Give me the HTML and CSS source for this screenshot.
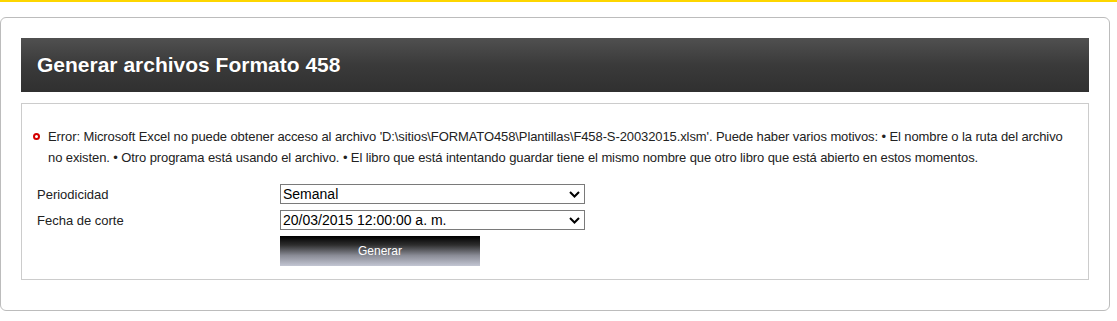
FILE: index.html
```html
<!DOCTYPE html>
<html lang="es">
<head>
  <meta charset="UTF-8">
  <title>Generar archivos Formato 458</title>
  <link rel="stylesheet" href="styles.css">
</head>
<body>

<div class="page">
  <div class="panel">
    <h1 class="panel-title">Generar archivos Formato 458</h1>

    <div class="panel-body">
      <ul class="errors">
        <li>Error: Microsoft Excel no puede obtener acceso al archivo 'D:\sitios\FORMATO458\Plantillas\F458-S-20032015.xlsm'. Puede haber varios motivos: • El nombre o la ruta del archivo no existen. • Otro programa está usando el archivo. • El libro que está intentando guardar tiene el mismo nombre que otro libro que está abierto en estos momentos.</li>
      </ul>

      <form class="gen-form">
        <div class="row">
          <label for="periodicidad">Periodicidad</label>
          <span class="select-wrap">
            <select id="periodicidad">
              <option>Semanal</option>
              <option>Mensual</option>
            </select>
            <svg class="chevron" width="11" height="7" viewBox="0 0 11 7"><path d="M1 1l4.5 4.5L10 1" fill="none" stroke="#000" stroke-width="2"/></svg>
          </span>
        </div>
        <div class="row">
          <label for="fecha">Fecha de corte</label>
          <span class="select-wrap">
            <select id="fecha">
              <option>20/03/2015 12:00:00 a. m.</option>
            </select>
            <svg class="chevron" width="11" height="7" viewBox="0 0 11 7"><path d="M1 1l4.5 4.5L10 1" fill="none" stroke="#000" stroke-width="2"/></svg>
          </span>
        </div>
        <div class="row">
          <span class="spacer"></span>
          <button type="button" class="btn">Generar</button>
        </div>
      </form>
    </div>
  </div>
</div>

</body>
</html>
```

FILE: styles.css
```css
body {
  margin: 0;
  font-family: "Liberation Sans", Arial, sans-serif;
  color: #222;
  background-color: #fff;
  border-top: 2px solid #fdd600;
}
.page {
  padding: 15px 7px 0 0;
}
.panel {
  border: 1px solid #bcbcbc;
  border-radius: 6px;
  padding: 20px 20px 30px 20px;
}
.panel-title {
  margin: 0;
  height: 54px;
  line-height: 54px;
  padding-left: 16px;
  font-size: 21px;
  font-weight: bold;
  color: #fff;
  text-shadow: 0 0 1px rgba(0, 0, 0, 0.4);
  background: linear-gradient(to bottom, #505050 0%, #3a3a3a 50%, #303030 100%);
}
.panel-body {
  margin-top: 11px;
  border: 1px solid #cccccc;
  padding: 22px 15px 13px 11px;
}
.errors {
  list-style: none;
  margin: 0 0 16px 0;
  padding: 0;
  font-size: 13px;
  line-height: 21px;
  letter-spacing: -0.1px;
}
.errors li {
  position: relative;
  padding-left: 15px;
}
.errors li::before {
  content: "";
  position: absolute;
  left: 0;
  top: 7px;
  width: 3px;
  height: 3px;
  border: 2px solid #d40000;
  border-radius: 50%;
}
.gen-form {
  padding-left: 4px;
}
.row {
  display: flex;
  align-items: center;
  margin-top: 6px;
}
.row:first-child {
  margin-top: 0;
}
.row label,
.spacer {
  width: 243px;
  font-size: 13px;
}
.select-wrap {
  position: relative;
  display: inline-block;
}
select {
  -webkit-appearance: none;
  appearance: none;
  width: 305px;
  height: 20px;
  margin: 0;
  padding: 0 0 0 2px;
  border: 1px solid #7a7a7a;
  border-radius: 0;
  background: #fff;
  font-family: "Liberation Sans", Arial, sans-serif;
  font-size: 14px;
  color: #000;
}
.chevron {
  position: absolute;
  right: 5px;
  top: 7px;
  pointer-events: none;
}
.btn {
  width: 200px;
  height: 30px;
  border: none;
  padding: 0;
  color: #fff;
  font-family: "Liberation Sans", Arial, sans-serif;
  font-size: 12px;
  cursor: pointer;
  background: linear-gradient(to bottom, #000 0%, #2e2e2e 30%, #8a8c96 65%, #c3c6d3 100%);
}
```
